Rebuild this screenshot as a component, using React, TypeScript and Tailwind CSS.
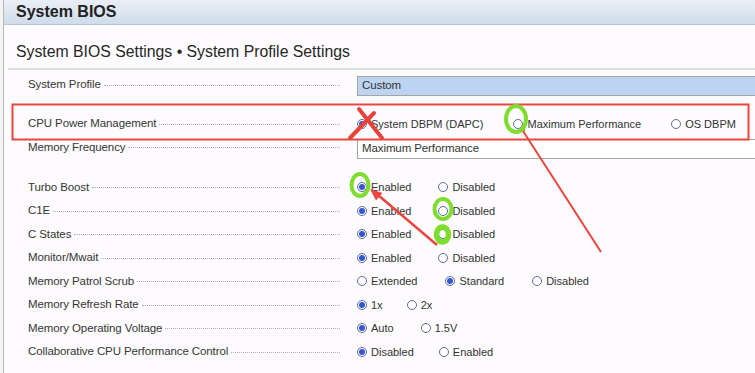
type Option = { text: string; on?: boolean }

type Setting = {
  label: string
  select?: string
  highlight?: boolean
  options?: Option[]
  gap?: string
  top?: string
  boxTop?: string
}

const settings: Setting[] = [
  { label: 'System Profile', select: 'Custom', highlight: true, boxTop: 'mt-[2px]' },
  {
    label: 'CPU Power Management',
    top: 'mt-[15.5px]',
    gap: 'gap-[30px]',
    options: [{ text: 'System DBPM (DAPC)', on: true }, { text: 'Maximum Performance' }, { text: 'OS DBPM' }],
  },
  { label: 'Memory Frequency', select: 'Maximum Performance', boxTop: 'mt-[3px]' },
  {
    label: 'Turbo Boost',
    top: 'mt-[16.5px]',
    gap: 'gap-[27px]',
    options: [{ text: 'Enabled', on: true }, { text: 'Disabled' }],
  },
  { label: 'C1E', gap: 'gap-[27px]', options: [{ text: 'Enabled', on: true }, { text: 'Disabled' }] },
  { label: 'C States', gap: 'gap-[27px]', options: [{ text: 'Enabled', on: true }, { text: 'Disabled' }] },
  { label: 'Monitor/Mwait', gap: 'gap-[27px]', options: [{ text: 'Enabled', on: true }, { text: 'Disabled' }] },
  {
    label: 'Memory Patrol Scrub',
    gap: 'gap-[28px]',
    options: [{ text: 'Extended' }, { text: 'Standard', on: true }, { text: 'Disabled' }],
  },
  { label: 'Memory Refresh Rate', gap: 'gap-[24px]', options: [{ text: '1x', on: true }, { text: '2x' }] },
  { label: 'Memory Operating Voltage', gap: 'gap-[27px]', options: [{ text: 'Auto', on: true }, { text: '1.5V' }] },
  {
    label: 'Collaborative CPU Performance Control',
    gap: 'gap-[25px]',
    options: [{ text: 'Disabled', on: true }, { text: 'Enabled' }],
  },
]

function Radio({ on }: { on?: boolean }) {
  return (
    <span className="w-[10px] h-[10px] rounded-full border border-[#5d6b99] bg-white flex items-center justify-center shrink-0">
      {on && <span className="w-[6px] h-[6px] rounded-full bg-[#3556d2]" />}
    </span>
  )
}

function SettingRow({ s }: { s: Setting }) {
  return (
    <div className={`flex items-center h-[23.5px] ${s.top ?? ''}`}>
      <div className="w-[312px] flex items-center shrink-0">
        <span className="text-[11.5px] tracking-[-0.1px] text-[#363636] whitespace-nowrap">{s.label}</span>
        <span className="flex-1 ml-[3px] mt-[1px] border-b border-dotted border-[#b0b0b0]" />
      </div>
      <div className="ml-[17px] flex-1">
        {s.select ? (
          <div
            className={`w-[420px] h-[20px] flex items-center pl-[4px] border border-[#a4a4a4] text-[11.5px] tracking-[-0.1px] text-[#333] ${
              s.boxTop ?? ''
            } ${s.highlight ? 'bg-[#bcd3f2]' : 'bg-white'}`}
          >
            {s.select}
          </div>
        ) : (
          <div className={`flex items-center ${s.gap ?? ''}`}>
            {s.options?.map((o) => (
              <div key={o.text} className="flex items-center gap-[4px]">
                <Radio on={o.on} />
                <span className="text-[11px] text-[#333] whitespace-nowrap">{o.text}</span>
              </div>
            ))}
          </div>
        )}
      </div>
    </div>
  )
}

export default function App() {
  return (
    <div className="relative w-[755px] h-[373px] overflow-hidden bg-[#fdfbfd] font-['Liberation_Sans',Arial,sans-serif] flex">
      <div className="w-[3px] bg-[#f3f3f3] shrink-0" />
      <div className="flex-1 border-l border-[#b8b8b8]">
        {/* header */}
        <div className="h-[25px] bg-gradient-to-b from-[#eaeff7] to-[#d0dcea] border-b border-[#bac7d7] flex items-center pl-[12px]">
          <span className="text-[16px] font-bold text-[#222]">System BIOS</span>
        </div>

        <div className="ml-[4px]">
          <div className="pt-[17px] pb-[6px] pl-[8px] border-b-2 border-[#dcdcdc]">
            <div className="text-[15.8px] leading-[20px] text-[#262626]">
              System BIOS Settings • System Profile Settings
            </div>
          </div>

          <div className="pt-[3px] pl-[20px]">
            {settings.map((s) => (
              <SettingRow key={s.label} s={s} />
            ))}
          </div>
        </div>
      </div>

      {/* hand-drawn annotations */}
      <svg className="absolute inset-0 pointer-events-none" width="755" height="373" viewBox="0 0 755 373">
        <rect x="12.5" y="104.5" width="736" height="35" fill="none" stroke="#e8463f" strokeWidth="2" />
        <path d="M359 109 L382 138" stroke="#e8423a" strokeWidth="4" strokeLinecap="round" />
        <path d="M350 138 L374 113" stroke="#e8423a" strokeWidth="4" strokeLinecap="round" />
        <line x1="523" y1="131" x2="601" y2="252" stroke="#e8463f" strokeWidth="2" />
        <circle cx="523" cy="130" r="2" fill="#e8423a" />
        <line x1="437" y1="245" x2="378" y2="195" stroke="#e8463f" strokeWidth="2.5" />
        <polygon points="370,189 382.4,192.9 376,200.5" fill="#e8463f" />
        <ellipse cx="516" cy="119" rx="10" ry="13" fill="none" stroke="#7fdd30" strokeWidth="4" />
        <ellipse cx="360" cy="185" rx="8.5" ry="11" fill="none" stroke="#7fdd30" strokeWidth="4" />
        <ellipse cx="443" cy="209" rx="8.5" ry="10" fill="none" stroke="#7fdd30" strokeWidth="4" />
        <ellipse cx="442.5" cy="234.5" rx="6" ry="7.5" fill="none" stroke="#7fdd30" strokeWidth="5.5" />
      </svg>
    </div>
  )
}
